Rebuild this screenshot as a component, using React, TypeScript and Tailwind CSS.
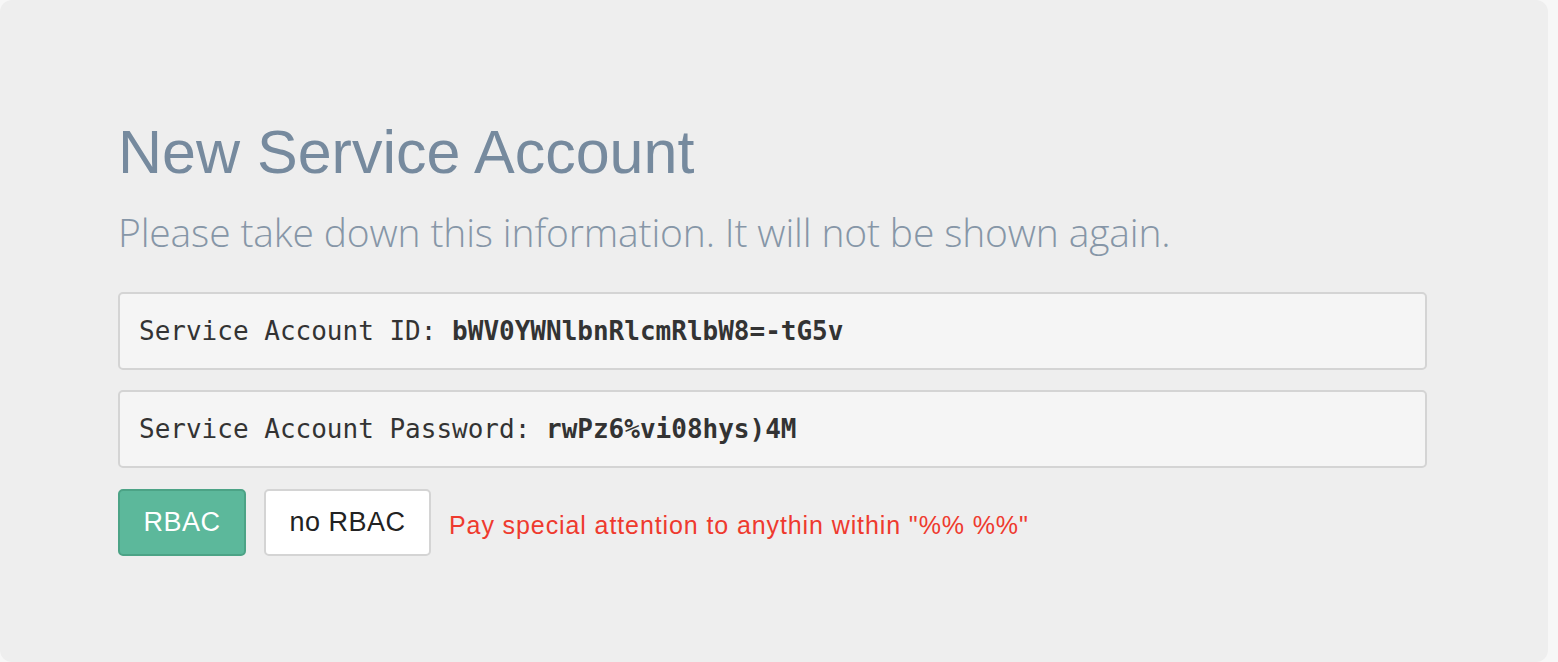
const mono = { fontFamily: '"DejaVu Sans Mono", "Liberation Mono", monospace' };

const CredentialBox = ({ label, value }: { label: string; value: string }) => (
  <div className="h-[78px] flex items-center pl-[19px] pr-5 bg-[#f5f5f5] border-2 border-[#d4d4d4] rounded-[5px] text-[26px] text-[#333]">
    <span className="whitespace-pre">
      {label} <b>{value}</b>
    </span>
  </div>
);

const App = () => {
  return (
    <div className="w-[1558px] h-[662px] bg-[#f7f7f7] font-['Liberation_Sans',Arial,sans-serif]">
      <div className="w-[1548px] h-[662px] bg-[#eeeeee] rounded-xl pl-[118px] pr-[121px] pt-[116px]">
        <h1 className="text-[61px] leading-[72px] text-[#768a9e]">New Service Account</h1>
        <p className="mt-[22px] text-[39px] leading-[44px] font-light text-[#8696a7] font-['Open_Sans',sans-serif] tracking-[-0.15px]">
          Please take down this information. It will not be shown again.
        </p>
        <div className="mt-[38px] flex flex-col gap-[20px]" style={mono}>
          <CredentialBox label="Service Account ID:" value="bWV0YWNlbnRlcmRlbW8=-tG5v" />
          <CredentialBox label="Service Account Password:" value="rwPz6%vi08hys)4M" />
        </div>
        <div className="mt-[21px] flex items-center">
          <button className="h-[67px] w-[128px] bg-[#5cb89b] border-2 border-[#4ca386] rounded-[5px] text-white text-[27px] tracking-[0.5px]">
            RBAC
          </button>
          <button className="ml-[18px] h-[67px] w-[167px] bg-white border-2 border-[#d4d4d4] rounded-[5px] text-[#222] text-[27px] tracking-[0.5px]">
            no RBAC
          </button>
          <span className="ml-[18px] mt-[6px] text-[25px] text-[#ee3a2e] tracking-[0.9px]">
            Pay special attention to anythin within "%% %%"
          </span>
        </div>
      </div>
    </div>
  );
};

export default App;
